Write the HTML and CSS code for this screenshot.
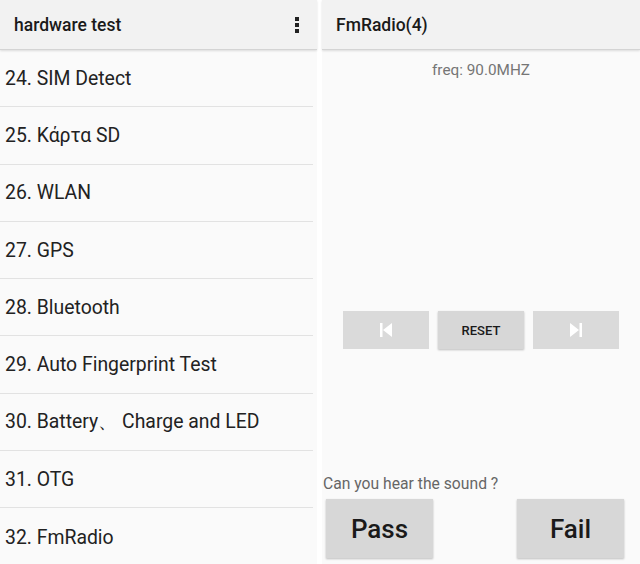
FILE: index.html
```html
<!DOCTYPE html>
<html>
<head>
<meta charset="utf-8">
<link rel="stylesheet" href="styles.css">
</head>
<body>
<div class="screen">
  <section class="panel left">
    <header class="bar">
      <span class="title">hardware test</span>
      <svg class="more" width="6" height="18" viewBox="0 0 6 18"><rect x="1" y="1" width="4" height="4" fill="#222"/><rect x="1" y="7" width="4" height="4" fill="#222"/><rect x="1" y="13" width="4" height="4" fill="#222"/></svg>
    </header>
    <ul class="list">
      <li>24. SIM Detect</li>
      <li>25. Κάρτα SD</li>
      <li>26. WLAN</li>
      <li>27. GPS</li>
      <li>28. Bluetooth</li>
      <li>29. Auto Fingerprint Test</li>
      <li>30. Battery、 Charge and LED</li>
      <li>31. OTG</li>
      <li>32. FmRadio</li>
    </ul>
  </section>
  <div class="sep"></div>
  <section class="panel right">
    <header class="bar">
      <span class="title">FmRadio(4)</span>
    </header>
    <div class="freq">freq: 90.0MHZ</div>
    <div class="controls">
      <div class="btn flat"><svg width="16" height="16" viewBox="0 0 16 16"><rect x="2" y="1" width="2.5" height="14" fill="#fff"/><path d="M14 1 L5 8 L14 15 Z" fill="#fff"/></svg></div>
      <div class="btn raised">RESET</div>
      <div class="btn flat"><svg width="16" height="16" viewBox="0 0 16 16"><path d="M2 1 L11 8 L2 15 Z" fill="#fff"/><rect x="11.5" y="1" width="2.5" height="14" fill="#fff"/></svg></div>
    </div>
    <div class="question">Can you hear the sound ?</div>
    <div class="answers">
      <div class="big">Pass</div>
      <div class="big">Fail</div>
    </div>
  </section>
</div>
</body>
</html>
```
FILE: styles.css
```css
html, body {
  margin: 0;
  padding: 0;
  background: #ffffff;
}
body {
  font-family: Roboto, "Noto Sans", "Liberation Sans", sans-serif;
  color: #212121;
}
.screen {
  display: flex;
  width: 640px;
  height: 564px;
  overflow: hidden;
}
.panel {
  background: #fafafa;
  height: 564px;
  display: flex;
  flex-direction: column;
}
.left {
  width: 317px;
}
.sep {
  width: 5px;
  background: #ffffff;
}
.right {
  width: 318px;
}
.bar {
  height: 50px;
  flex: none;
  background: #f2f2f2;
  border-bottom: 1px solid #d4d4d4;
  box-shadow: 0 1px 2px rgba(0,0,0,0.12);
  display: flex;
  align-items: center;
  justify-content: space-between;
  box-sizing: border-box;
  position: relative;
  z-index: 1;
}
.left .bar {
  padding: 0 17px 0 14px;
}
.right .bar {
  padding: 0 14px;
}
.title {
  font-size: 17.5px;
  font-weight: 500;
  color: #1a1a1a;
}
.more {
  display: block;
}
.list {
  list-style: none;
  margin: 0;
  padding: 0;
}
.list li {
  height: 57.3px;
  box-sizing: border-box;
  border-bottom: 1px solid #e2e2e2;
  width: 313px;
  display: flex;
  align-items: center;
  padding-left: 5px;
  font-size: 19.4px;
  color: #222;
}
.list li:last-child {
  border-bottom: none;
}
.freq {
  margin-top: 10px;
  height: 20px;
  line-height: 20px;
  text-align: center;
  font-size: 15.3px;
  color: #757575;
}
.controls {
  margin-top: 231px;
  display: flex;
  justify-content: center;
  gap: 9px;
}
.btn {
  width: 86px;
  height: 38px;
  background: #d7d7d7;
  display: flex;
  align-items: center;
  justify-content: center;
  font-size: 13px;
  font-weight: 500;
  color: #1a1a1a;
}
.flat {
  background: #dadada;
}
.raised {
  box-shadow: 0 1px 2px rgba(0,0,0,0.25);
}
.question {
  margin-top: 125px;
  padding-left: 1px;
  height: 20px;
  line-height: 20px;
  font-size: 15.7px;
  color: #666;
}
.answers {
  margin-top: 5px;
  display: flex;
  justify-content: space-between;
  padding: 0 16px 0 4px;
}
.big {
  width: 107px;
  height: 59px;
  background: #d7d7d7;
  box-shadow: 0 1px 2px rgba(0,0,0,0.25);
  display: flex;
  align-items: center;
  justify-content: center;
  font-size: 26px;
  font-weight: 500;
  color: #1a1a1a;
}
```
